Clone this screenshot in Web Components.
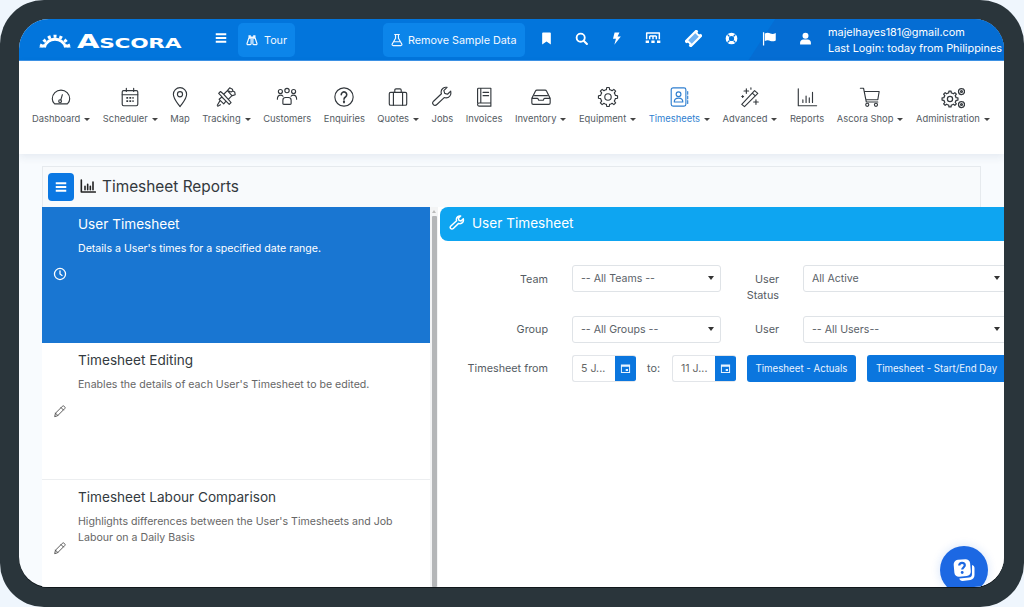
<!DOCTYPE html>
<html lang="en">
<head>
<meta charset="utf-8">
<title>Ascora - Timesheet Reports</title>
<style>
html,body{margin:0;padding:0;background:#eff6fd;width:1024px;height:607px;overflow:hidden}
body{font-family:Inter,"Noto Sans",sans-serif}
</style>
</head>
<body>
<app-frame>
  <app-header></app-header>
  <nav-bar>
    <nav-item icon="gauge" caret>Dashboard</nav-item>
    <nav-item icon="calendar" caret>Scheduler</nav-item>
    <nav-item icon="pin">Map</nav-item>
    <nav-item icon="satellite" caret>Tracking</nav-item>
    <nav-item icon="people">Customers</nav-item>
    <nav-item icon="question">Enquiries</nav-item>
    <nav-item icon="briefcase" caret>Quotes</nav-item>
    <nav-item icon="wrench">Jobs</nav-item>
    <nav-item icon="book">Invoices</nav-item>
    <nav-item icon="inbox" caret>Inventory</nav-item>
    <nav-item icon="gear" caret>Equipment</nav-item>
    <nav-item icon="contacts" caret active>Timesheets</nav-item>
    <nav-item icon="wand" caret>Advanced</nav-item>
    <nav-item icon="bars">Reports</nav-item>
    <nav-item icon="cart" caret>Ascora Shop</nav-item>
    <nav-item icon="gears" caret>Administration</nav-item>
  </nav-bar>
  <report-page>
    <page-title slot="title">Timesheet Reports</page-title>
    <report-item slot="list" icon="clock" active heading="User Timesheet">Details a User's times for a specified date range.</report-item>
    <report-item slot="list" icon="pencil" heading="Timesheet Editing">Enables the details of each User's Timesheet to be edited.</report-item>
    <report-item slot="list" icon="pencil" heading="Timesheet Labour Comparison">Highlights differences between the User's Timesheets and Job Labour on a Daily Basis</report-item>
    <report-form slot="panel"></report-form>
  </report-page>
  <chat-bubble></chat-bubble>
</app-frame>

<script>
function gearPath(cx,cy,ro,ri,n){
  var d='',st=Math.PI*2/n;
  for(var i=0;i<n;i++){
    var a=i*st-Math.PI/2;
    var pts=[[ri,a-st*.5],[ri,a-st*.27],[ro,a-st*.17],[ro,a+st*.17],[ri,a+st*.27]];
    pts.forEach(function(p,j){
      d+=(i===0&&j===0?'M':'L')+(cx+p[0]*Math.cos(p[1])).toFixed(2)+' '+(cy+p[0]*Math.sin(p[1])).toFixed(2);
    });
  }
  return d+'Z';
}
var ICONS={
gauge:'<path d="M5 19.5C3.2 18 2.5 16 2.500 14a9.500 9.500 0 0 1 19 0c0 2-.7 4-2.500 5.500z"/><circle cx="11" cy="16.500" r="1.500"/><path d="M11.800 15.200 13.500 9.500"/>',
calendar:'<rect x="3.500" y="5" width="17" height="16.500" rx="1.500"/><path d="M3.500 9.500h17M8 2.500V6M16 2.500V6"/><path stroke-width="1.900" stroke-dasharray="2 1.300" d="M8 13h8M8 16.500h8" stroke-linecap="butt"/>',
pin:'<path d="M12 22.500C8.500 17.500 4.800 14 4.800 9a7.200 7.200 0 0 1 14.400 0c0 5-3.700 8.500-7.200 13.500z"/><circle cx="12" cy="9" r="2.800"/>',
satellite:'<path d="m9.500 9 4-4 5 5.500-4 4zM13.500 5l2.500-3 3 1.500.5 2-2 1zM19 10.500l3-1-.5-3-2-1M9.500 9 6 6l-2 2 3.500 3.500M14.500 14.500l3 3.500-2 2-3.500-3.500M7.500 12 12 16.500l-2.500 3-5-5zM5.500 16 2.500 21M3 22l3-1.500"/>',
people:'<circle cx="12" cy="5" r="2.400"/><circle cx="4.800" cy="6" r="2.200"/><circle cx="19.200" cy="6" r="2.200"/><path d="M7.500 19v-3.500a3 3 0 0 1 3-3h3a3 3 0 0 1 3 3V19c0 .6-.4 1-1 1h-7c-.6 0-1-.4-1-1z"/><path d="M1.500 14.500c0-2.500 1.500-4.500 3.500-4.500 1 0 2 .4 2.600 1.200M22.500 14.500c0-2.500-1.500-4.500-3.500-4.500-1 0-2 .4-2.600 1.200"/>',
question:'<circle cx="12" cy="12" r="10"/><path stroke-width="1.700" d="M9 9.500a3 3 0 1 1 4.600 2.500c-1 .7-1.600 1.300-1.600 2.500"/><path stroke-width="2" d="M12 16.600v1.300"/>',
briefcase:'<rect x="2.500" y="7" width="19" height="14" rx="1.500"/><path d="M8.500 7V4.500c0-.8.500-1.300 1.300-1.300h4.400c.8 0 1.300.5 1.300 1.300V7M7 7v14M17 7v14"/>',
wrench:'<path d="M21.500 5.500 18 9l-3-1-1-3 3.500-3.500c-3-.8-6.500 1.500-6.500 5 0 .8.100 1.300.4 2L2.800 16.600c-1.200 1.200-1.200 2.800-.2 3.800s2.600 1 3.800-.2l8-7.600c.7.300 1.300.4 2.100.4 3.500 0 5.800-3.500 5-6.500z"/>',
book:'<path d="M5 18.500V3.500c0-.6.400-1 1-1h13.500v16H6.500A1.800 1.800 0 0 0 5 20.300c0 .9.700 1.700 1.500 1.700h13v-3.500M8.500 2.500v16M11 7h6M11 10.500h6"/>',
inbox:'<path d="M2 13.500 6 5.500c.3-.6.700-1 1.500-1h9c.8 0 1.200.4 1.500 1l4 8v5c0 1-.6 1.500-1.500 1.500h-17C2.600 20 2 19.500 2 18.500zM2 13.500h6c.4 0 .6.200.8.500l.7 1.500h5l.7-1.500c.2-.3.400-.5.800-.5h6M5 10.500h14"/>',
gear:'<path d="'+gearPath(12,12,10.500,8.200,8)+'"/><circle cx="12" cy="12" r="3.500"/>',
contacts:'<rect x="3.500" y="2" width="16" height="20" rx="2"/><circle cx="11.500" cy="9" r="2.600"/><path d="M6.800 17.500c0-3 2-4.300 4.700-4.300s4.700 1.300 4.700 4.300zM21.500 6v3M21.500 11v3M21.500 16v3"/>',
wand:'<path d="m3 20 14-15 3.500 3L6 22.500zM14.500 7.700l3.300 3"/><path d="M8 3v5M5.500 5.500h5M4 10.500v2M3 11.500h2M18.500 15v5M16 17.500h5M13 2v1.500"/>',
bars:'<path d="M2.500 3v18.500h20M7.500 18v-3M11 18V11M14.500 18v-5M18 18V7"/>',
cart:'<path d="M1.500 2.500h3.500l3 15h12.500M5.800 6H22l-1.500 9H7.500"/><circle cx="9" cy="20.500" r="1.700"/><circle cx="18.500" cy="20.500" r="1.700"/>',
gears:'<path d="'+gearPath(9,13,8,6.200,8)+'"/><circle cx="9" cy="13" r="2.600"/><circle cx="20.500" cy="5.500" r="3"/><circle cx="20.500" cy="5.500" r=".900"/><circle cx="20.500" cy="18.500" r="3"/><circle cx="20.500" cy="18.500" r=".900"/>',
clock:'<circle cx="12" cy="12" r="9.500" stroke-width="2.200"/><path stroke-width="2.200" d="M12 6.500V12l3.500 2.500"/>',
pencil:'<path stroke-width="1.500" d="m3 21 1.300-5.300L16 4c1-1 2.300-1 3.200-.1l.9.9c.9.9.9 2.200-.1 3.200L8.300 19.700zM4.300 15.700l4 4M13.800 6.200l4 4"/>',
wrenchw:'<path stroke-width="2.200" d="M21.500 5.500 18 9l-3-1-1-3 3.500-3.500c-3-.8-6.500 1.500-6.500 5 0 .8.100 1.300.4 2L2.800 16.600c-1.200 1.200-1.200 2.800-.2 3.800s2.600 1 3.800-.2l8-7.600c.7.300 1.300.4 2.100.4 3.500 0 5.800-3.500 5-6.500z"/>',
chart:'<path stroke-width="2.400" d="M2 3v18h21M7.500 17.500v-5M11.500 17.500v-8M15.500 17.500v-5M19.500 17.500V6"/>',
menu:'<path stroke-width="3.200" stroke-linecap="butt" d="M3 5.500h18M3 12h18M3 18.500h18"/>',
tour:'<path fill="currentColor" stroke="none" d="M6 4h4v6H6zM14 4h4v6h-4zM10 6h4v3h-4z"/><path stroke-width="2" d="M6.500 9 3.500 18c-.3 1 .3 2 1.500 2h4c1 0 1.500-.8 1.500-1.500V9M17.500 9l3 9c.3 1-.3 2-1.500 2h-4c-1 0-1.500-.8-1.500-1.500V9"/>',
flask:'<path stroke-width="2" d="M8 2.500h8M9.500 2.500V9L3.800 19c-.6 1.200 0 2.500 1.500 2.500h13.400c1.500 0 2.100-1.300 1.500-2.500L14.500 9V2.500M7 15h10"/>',
bookmark:'<path fill="currentColor" stroke="none" d="M4 2.500C4 1.700 4.700 1 5.500 1h13c.8 0 1.500.7 1.500 1.500V23l-8-5.500L4 23z"/>',
search:'<circle cx="10.500" cy="10.500" r="7.500" stroke-width="3.400"/><path stroke-width="3.800" d="m16 16 6 6"/>',
bolt:'<path fill="currentColor" stroke="none" d="M8.500 1h9l-3.500 7.500h6L8 23.500l3-11H5.500z"/>',
sitemap:'<path stroke-width="2.200" d="M2.500 14V4.500h19V14M12 9v5M7 9v5M17 9v5M7 9h10" stroke-linecap="butt"/><path stroke-width="3.800" stroke-linecap="butt" d="M1 17.500h5M9.500 17.500h5M18 17.500h5"/>',
ticket:'<g transform="rotate(-45 12 12)"><path fill="currentColor" stroke="none" d="M0 5.500h24v4a2.500 2.500 0 0 0 0 5v4H0v-4a2.500 2.500 0 0 0 0-5z"/><rect x="5" y="8.500" width="14" height="7" fill="#6fb2f3" stroke="none"/></g>',
lifering:'<circle cx="12" cy="12" r="7.800" stroke-width="6"/><g stroke="#0274dc" stroke-width="2.200" stroke-linecap="butt"><path d="m4.500 4.500 3.800 3.800M19.500 4.500l-3.800 3.800M4.500 19.500l3.800-3.800M19.500 19.500l-3.800-3.800"/></g>',
flag:'<path fill="currentColor" stroke="none" d="M1.500 2h2v21h-2zM4.500 4c4-1.800 7-.8 9 0 2.500 1 5 1 8.500-.8V15c-3.500 1.800-6 1.800-8.500.8-2-.8-5-1.800-9 0z"/>',
user:'<circle cx="12" cy="7" r="5.500" fill="currentColor" stroke="none"/><path fill="currentColor" stroke="none" d="M2 23v-3c0-3.500 2.500-6 6-6h8c3.500 0 6 2.500 6 6v3z"/>',
cal:'<path fill="currentColor" stroke="none" fill-rule="evenodd" d="M2 3h20v19H2zM4.200 8v11.800h15.600V8zM12.500 13h5v4.500h-5z"/>'
};
function svg(name,size,extra){
  return '<svg part="icon" viewBox="0 0 24 24" width="'+size+'" height="'+size+'" fill="none" stroke="currentColor" stroke-width="1.250" stroke-linecap="round" stroke-linejoin="round" style="display:block;flex:none;'+(extra||'')+'" aria-hidden="true">'+ICONS[name]+'</svg>';
}
function el(name,css,html){
  customElements.define(name,class extends HTMLElement{
    connectedCallback(){
      if(this.shadowRoot)return;
      var r=this.attachShadow({mode:'open'});
      r.innerHTML='<style>'+css+'</style>'+(typeof html==='function'?html(this):html);
    }
  });
}

el('app-frame',`
:host{display:block;box-sizing:border-box;width:1024px;height:607px;background:#2a353b;border-radius:44px;padding:19px 20px 20px 19px}
.screen{position:relative;width:985px;height:568px;overflow:hidden;border-radius:30px;background:#f8fbfe;display:flex;flex-direction:column;box-shadow:0 1px 0 #10171b}
`,`<div class="screen"><slot></slot></div>`);

el('app-header',`
:host{display:flex;flex:none;position:relative;box-sizing:border-box;height:42px;background:#0275dc;color:#fff;align-items:center;font-size:10.800px;overflow:hidden;border-bottom:1px solid #3e93e6}
:host::before{content:"";position:absolute;left:740px;top:-30px;width:400px;height:110px;background:#056dd3;transform:skewX(-33deg)}
.logo{position:relative;flex:none;width:145px;margin-left:20px;height:42px;display:flex;align-items:center}
.word{position:absolute;left:38px;top:13px;font:700 18.800px/20px "DejaVu Sans",sans-serif;transform:scaleX(1.55);transform-origin:0 50%;white-space:nowrap;letter-spacing:-.2px}
.word span{font-size:14px}
.burger{position:relative;margin:-3px 0 0 30px}
.btn{position:relative;flex:none;box-sizing:border-box;height:34px;margin-top:1px;border-radius:5px;background:#0c85ea;display:flex;align-items:center;padding:0 0 0 7px;white-space:nowrap;color:#f2f8ff}
.tour{margin-left:10px;width:57px;gap:5px}
.remove{margin-left:88px;width:142px;gap:4px}
.ico{position:relative;flex:none;width:13px;margin-top:-3px;display:flex;justify-content:center}
.user{position:relative;margin:0 0 0 16px;line-height:16px;font-size:10.900px;white-space:nowrap}
`,`
<div class="logo">
  <svg width="32" height="17" viewBox="0 0 32 17" style="display:block;margin-top:0" aria-hidden="true">
    <path d="M5.500 16A11 11 0 0 1 26.500 16" fill="none" stroke="#fff" stroke-width="3"/>
    <path d="M2 16A14.500 14.500 0 0 1 30 16" fill="none" stroke="#fff" stroke-width="3.200" stroke-dasharray="3 2.800"/>
    <path d="M0 16.500h7L5 13zM32 16.500h-7l2-3.500z" fill="#fff"/>
  </svg>
  <div class="word">A<span>SCORA</span></div>
</div>
<div class="burger">${svg('menu',14)}</div>
<div class="btn tour">${svg('tour',14)}<span>Tour</span></div>
<div class="btn remove">${svg('flask',14)}<span>Remove Sample Data</span></div>
<div class="ico" style="margin-left:15px">${svg('bookmark',13)}</div>
<div class="ico" style="margin-left:22px">${svg('search',13)}</div>
<div class="ico" style="margin-left:22px">${svg('bolt',13)}</div>
<div class="ico" style="margin-left:22px;width:16px">${svg('sitemap',16)}</div>
<div class="ico" style="margin-left:24px;width:17px">${svg('ticket',17)}</div>
<div class="ico" style="margin-left:23px">${svg('lifering',13)}</div>
<div class="ico" style="margin-left:24px;width:15px">${svg('flag',15)}</div>
<div class="ico" style="margin-left:22px">${svg('user',13)}</div>
<div class="user">majelhayes181@gmail.com<br>Last Login: today from Philippines</div>
`);

el('nav-bar',`
:host{display:flex;flex:none;position:relative;z-index:2;box-sizing:border-box;height:93px;background:#fff;padding:25px 0 0 13px;gap:12.500px;box-shadow:0 3px 8px rgba(40,70,110,.09)}
`,`<slot></slot>`);

el('nav-item',`
:host{display:flex;flex-direction:column;align-items:center;flex:none;color:#555c63;font-size:9.400px;line-height:14px;white-space:nowrap}
:host([active]){color:#2f7fd0}
.i{color:#33383d;height:24px;margin-bottom:2px;width:0;display:flex;justify-content:center}
:host([active]) .i{color:#2f7fd0}
.t{display:flex;align-items:center;gap:4px}
.c{width:0;height:0;border:3px solid transparent;border-top:3.500px solid currentColor;border-bottom:0;color:#444}
`,h=>`<div class="i">${svg(h.getAttribute('icon'),h.getAttribute('icon')==='gears'?24:22)}</div><div class="t"><slot></slot>${h.hasAttribute('caret')?'<span class="c"></span>':''}</div>`);

el('report-page',`
:host{display:flex;flex-direction:column;flex:1;min-height:0;padding-top:12px}
.title{margin:0 23px}
.split{display:flex;flex:1;min-height:0;margin-left:23px;overflow:hidden}
.list{flex:none;width:388px;display:flex;flex-direction:column;background:#fff}
.bar{flex:none;width:8px;background:#f3f4f5;position:relative;box-sizing:border-box;padding:9px 1.500px 0}
.bar::before{content:"";position:absolute;left:2px;top:3px;border:2px solid transparent;border-bottom:3px solid #bbb;border-top:0}
.thumb{height:100%;background:#b4b6b8;border-radius:1px}
.panel{flex:1;min-width:0;background:#fff;padding-left:2px;overflow:hidden}
`,`<div class="title"><slot name="title"></slot></div>
<div class="split"><div class="list"><slot name="list"></slot></div><div class="bar"><div class="thumb"></div></div><div class="panel"><slot name="panel"></slot></div></div>`);

el('page-title',`
:host{display:flex;align-items:center;box-sizing:border-box;height:41px;background:#f8fafc;border:1px solid #e6eaee;border-bottom:0;padding:0 0 2px 5px;color:#33383d;font-size:15.400px;white-space:nowrap}
.b{width:26px;height:28px;background:#0b78e3;border-radius:4px;color:#fff;display:flex;align-items:center;justify-content:center;margin:2px 6px 0 0}
.c{margin-right:6px;color:#222}
`,`<div class="b">${svg('menu',14)}</div><div class="c">${svg('chart',16)}</div><slot></slot>`);

el('report-item',`
:host{display:flex;flex:none;position:relative;box-sizing:border-box;height:137px;background:#fff;color:#666;border-bottom:1px solid #eceef0;padding:9px 20px 0 36px}
:host([active]){background:#1976d2;color:#fff;border-bottom:0;height:136px}
.ic{position:absolute;left:11px;top:61px;color:#444}
:host([active]) .ic{color:#fff;top:60px}
h3{margin:0 0 9px;font-weight:400;font-size:13.600px;line-height:16px;color:#333a40}
:host([active]) h3{color:#fff}
p{margin:0;font-size:10.600px;line-height:16px}
`,h=>`<div class="ic">${svg(h.getAttribute('icon'),14)}</div><div><h3>${h.getAttribute('heading')}</h3><p><slot></slot></p></div>`);

el('report-form',`
:host{display:block;font-size:10.800px;color:#555c63}
.head{box-sizing:border-box;height:34px;background:#0ea5f1;border-radius:8px 0 0 8px;color:#fff;display:flex;align-items:center;gap:7px;padding:0 0 2px 9px;font-size:13.600px}
.row{display:grid;grid-template-columns:132px 149px 58px 228px;width:567px}
.lab{text-align:right;padding-right:24px;line-height:16px;padding-top:6px}
.first .lab{padding-top:7px}
.lab2{padding-right:0}
.dates{display:flex;align-items:center;height:27px;white-space:nowrap;width:600px}
.from{width:132px;text-align:right;padding-right:24px;box-sizing:border-box;flex:none}
.to{margin:0 11px;width:14px;flex:none}
`,`
<div class="head">${svg('wrenchw',16)}<span>User Timesheet</span></div>
<div class="row first" style="margin-top:24px;height:51px"><div class="lab">Team</div><form-select>-- All Teams --</form-select><div class="lab lab2">User<br>Status</div><form-select style="margin-left:24px">All Active</form-select></div>
<div class="row" style="height:39px"><div class="lab">Group</div><form-select>-- All Groups --</form-select><div class="lab lab2">User</div><form-select style="margin-left:24px">-- All Users--</form-select></div>
<div class="dates"><div class="from">Timesheet from</div><date-input>5 J...</date-input><span class="to">to:</span><date-input>11 J...</date-input><primary-btn style="margin-left:11px;width:109px">Timesheet - Actuals</primary-btn><primary-btn style="margin-left:11px;width:139px">Timesheet - Start/End Day</primary-btn></div>
`);

el('form-select',`
:host{display:flex;box-sizing:border-box;height:27px;align-items:center;justify-content:space-between;background:#fff;border:1px solid #dfe3e7;border-radius:3px;padding:0 6px 1px 8px;font-size:10.600px;color:#5a6168;white-space:nowrap}
.c{border:3px solid transparent;border-top:4px solid #333;border-bottom:0}
`,`<slot></slot><span class="c"></span>`);

el('date-input',`
:host{display:flex;flex:none;box-sizing:border-box;width:64px;height:27px;border:1px solid #e2e5e9;border-right:0;border-radius:3px;overflow:hidden;background:#fff;color:#666;font-size:10.600px}
.t{flex:1;padding-left:8px;line-height:25px}
.b{width:21px;background:#0b76de;color:#e8f3ff;display:flex;align-items:center;justify-content:center}
`,`<div class="t"><slot></slot></div><div class="b">${svg('cal',11)}</div>`);

el('primary-btn',`
:host{display:flex;flex:none;box-sizing:border-box;height:27px;align-items:center;justify-content:center;background:#0b76de;color:#eaf4ff;border-radius:3px;font-size:9.700px;white-space:nowrap}
`,`<slot></slot>`);

el('chat-bubble',`
:host{display:flex;position:absolute;left:921px;top:527px;width:48px;height:48px;border-radius:50%;background:#1c68e3;align-items:center;justify-content:center;box-shadow:0 0 10px rgba(28,104,227,.18);color:#fff;z-index:5}
`,`<svg width="26" height="26" viewBox="0 0 26 26" aria-hidden="true" style="display:block"><path fill="#fff" d="M21 8c1.500.4 2.500 1.500 2.500 3v7c0 2.500-1.500 4.500-4 5l-8 1c-1.700 0-2.900-1-3.200-2.500l9.700-1c2 0 3-1.500 3-3.500z"/><rect x="3" y="2.500" width="16.500" height="17" rx="4.500" fill="#fff" transform="rotate(-5 11 11)"/><path fill="none" stroke="#1c68e3" stroke-width="2.200" d="M8.200 8.500c0-1.800 1.200-2.700 2.800-2.700s2.800 1 2.800 2.500c0 2-2.600 2.300-2.600 4.200"/><circle cx="11.200" cy="15.500" r="1.400" fill="#1c68e3"/></svg>`);
</script>
</body>
</html>
